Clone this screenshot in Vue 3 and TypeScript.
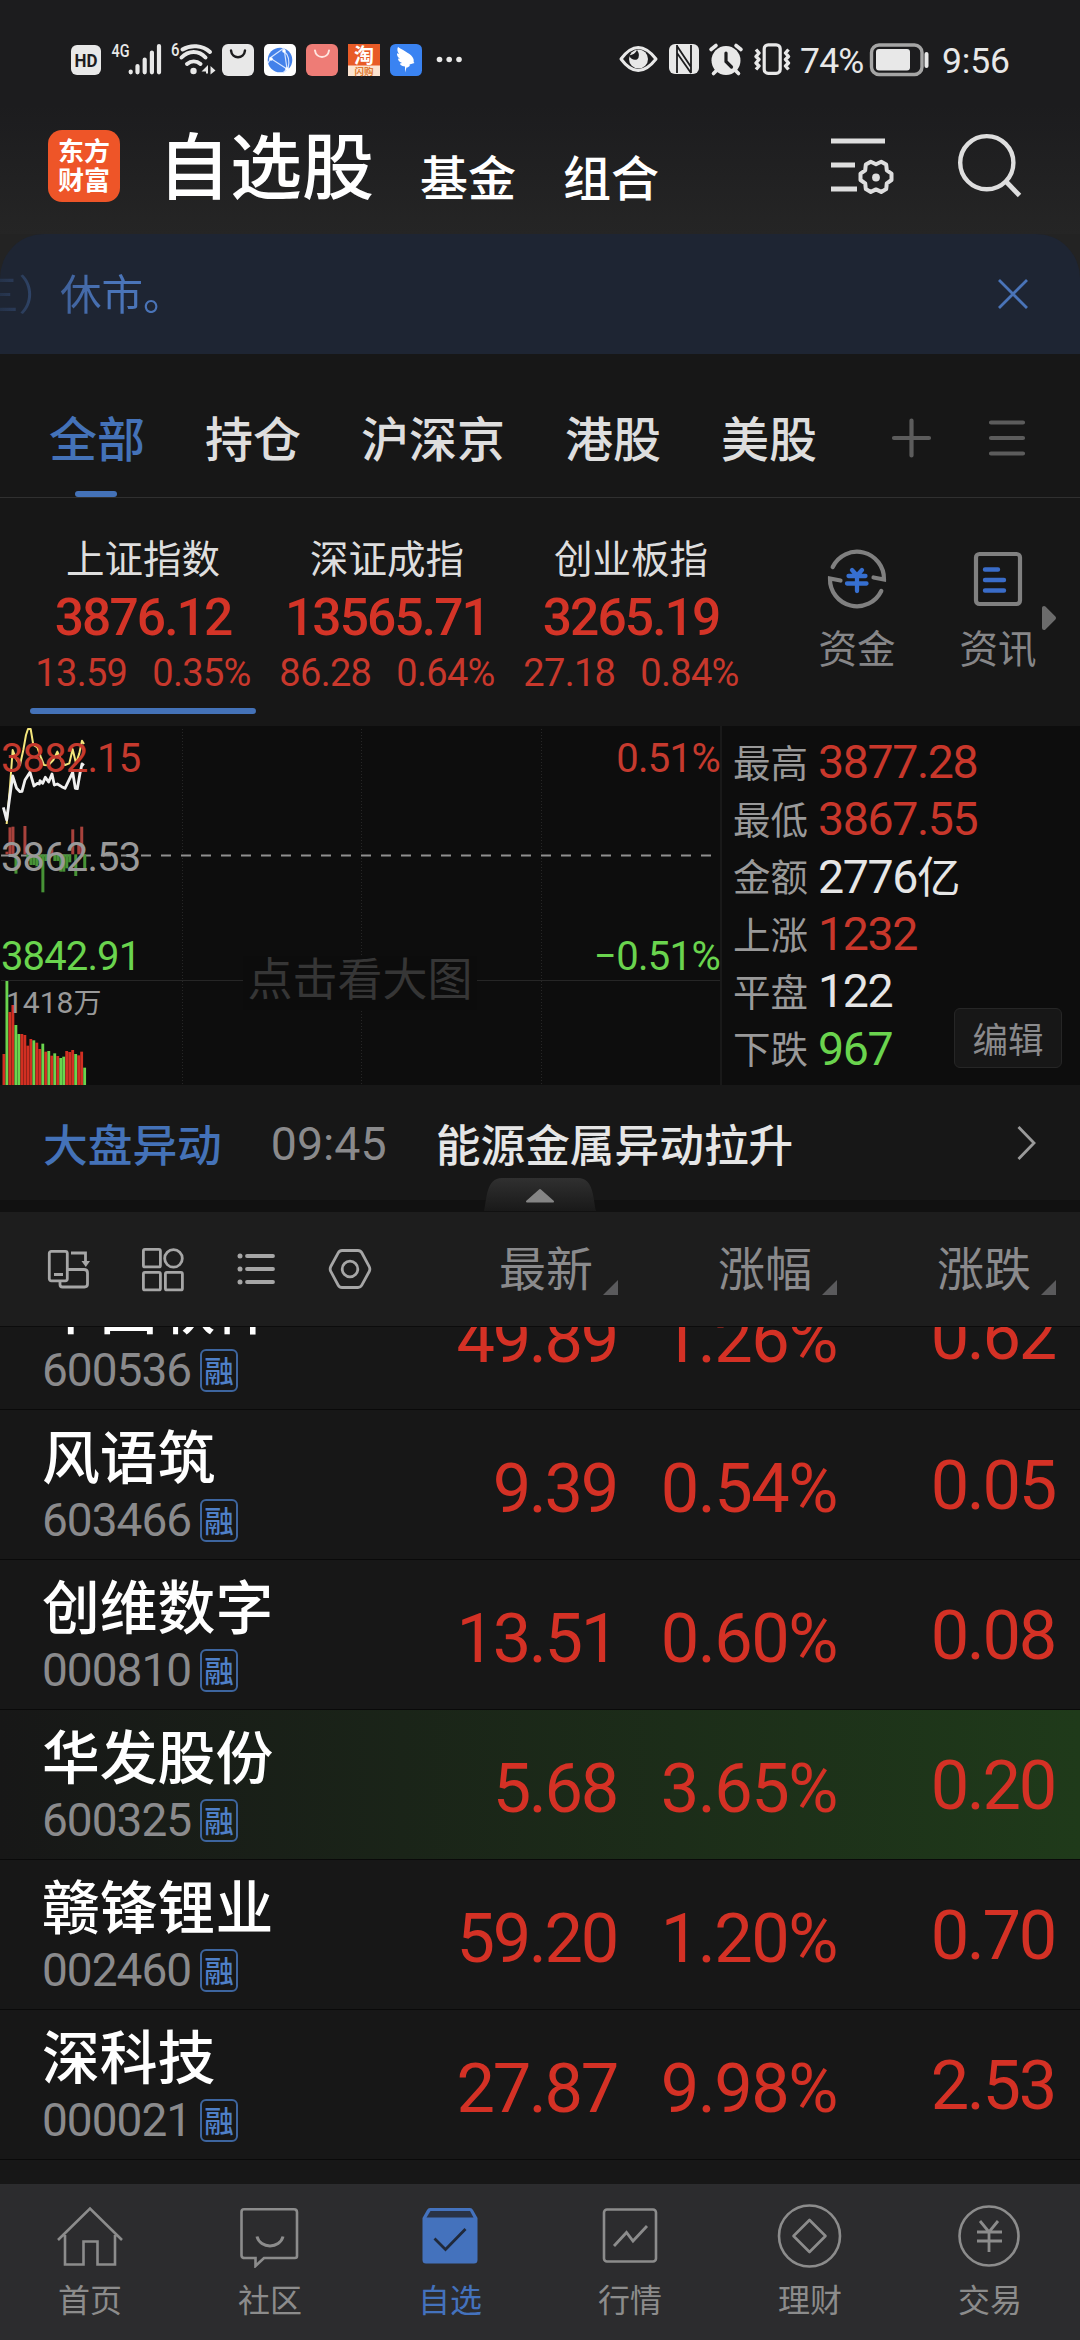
<script setup lang="ts">
interface IndexQuote {
  name: string
  value: string
  diff: string
  pct: string
}
interface Stat {
  label: string
  value: string
  unit?: string
  tone: 'up' | 'down' | 'flat'
}
interface Stock {
  name: string
  code: string
  price: string
  pct: string
  change: string
  flash?: boolean
}

const tabs = ['全部', '持仓', '沪深京', '港股', '美股']

const indices: IndexQuote[] = [
  { name: '上证指数', value: '3876.12', diff: '13.59', pct: '0.35%' },
  { name: '深证成指', value: '13565.71', diff: '86.28', pct: '0.64%' },
  { name: '创业板指', value: '3265.19', diff: '27.18', pct: '0.84%' },
]

const stats: Stat[] = [
  { label: '最高', value: '3877.28', tone: 'up' },
  { label: '最低', value: '3867.55', tone: 'up' },
  { label: '金额', value: '2776', unit: '亿', tone: 'flat' },
  { label: '上涨', value: '1232', tone: 'up' },
  { label: '平盘', value: '122', tone: 'flat' },
  { label: '下跌', value: '967', tone: 'down' },
]

const columns = ['最新', '涨幅', '涨跌']

const stocks: Stock[] = [
  { name: '中国软件', code: '600536', price: '49.89', pct: '1.26%', change: '0.62' },
  { name: '风语筑', code: '603466', price: '9.39', pct: '0.54%', change: '0.05' },
  { name: '创维数字', code: '000810', price: '13.51', pct: '0.60%', change: '0.08' },
  { name: '华发股份', code: '600325', price: '5.68', pct: '3.65%', change: '0.20', flash: true },
  { name: '赣锋锂业', code: '002460', price: '59.20', pct: '1.20%', change: '0.70' },
  { name: '深科技', code: '000021', price: '27.87', pct: '9.98%', change: '2.53' },
]

const RED = '#d22f22'
const GREEN = '#6ad44e'

// Minute volume: [bar height, direction]
const volumes: [number, 'r' | 'g'][] = [
  [93, 'r'], [312, 'g'], [219, 'r'], [240, 'r'], [180, 'g'], [153, 'g'], [153, 'r'],
  [150, 'r'], [118, 'r'], [138, 'r'], [134, 'g'], [127, 'r'], [108, 'r'], [124, 'g'],
  [100, 'r'], [102, 'g'], [88, 'r'], [95, 'g'], [87, 'r'], [81, 'g'], [85, 'g'],
  [102, 'r'], [99, 'r'], [105, 'r'], [93, 'g'], [89, 'r'], [100, 'r'], [52, 'g'],
]

// Minute momentum around the previous close, positive is up
const momentum = [
  0, 8, 81, 83, -58, 0, 0, 85, -20, -32, -32, -36, -28, -114, -20, -20, 18, -20, -20,
  -52, -52, -42, -24, 75, -65, 28, 83, -42,
]
</script>

<template>
  <div class="screen">
    <header class="top">
      <div class="status">
        <svg class="st-left" width="400" height="40" viewBox="0 0 400 40">
          <rect x="1" y="5" width="30" height="30" rx="6" fill="#e8e8e8" />
          <text x="4.500" y="27" class="hd" textLength="23" lengthAdjust="spacingAndGlyphs">HD</text>
          <text x="41.500" y="17" class="tiny" textLength="18" lengthAdjust="spacingAndGlyphs">4G</text>
          <g stroke="#e8e8e8" stroke-width="4.200" stroke-linecap="round">
            <path d="M60.700 31.500v.8M67.500 26v6.300M74.700 19.500v12.800M81.900 12.500v19.800M89 6v26.300" />
          </g>
          <text x="101" y="16" class="tiny" textLength="8.500" lengthAdjust="spacingAndGlyphs">6</text>
          <g fill="none" stroke="#e8e8e8" stroke-width="4" stroke-linecap="round">
            <path d="M112.500 9.500c8-5 20-4.500 27.500 2.500M111.500 17.500c7-7.500 17.500-7.500 24 0M117 24c4-3.500 9.500-3.500 13.500 0" />
          </g>
          <circle cx="123.500" cy="31" r="3.200" fill="#e8e8e8" />
          <path d="M131.500 31.500l6.500-6.500v8.500h-2v-2zM140.500 26l5 4.500-5 4z" fill="#e8e8e8" />
          <rect x="152" y="4" width="32" height="32" rx="6" fill="#e8e8e8" />
          <path d="M161 10.500c1 9 13 9 14 0" fill="none" stroke="#1c1c1e" stroke-width="2.400" stroke-linecap="round" />
          <rect x="194" y="4" width="32" height="32" rx="5" fill="#fff" />
          <circle cx="210" cy="20" r="12.300" fill="#4381ea" />
          <path d="M214 8l-14 10 17 11-3-21M198 23l3-5M217 29l-4 4M214 11q7 6 4 18" fill="none" stroke="#d5e4ff" stroke-width="1.200" />
          <g fill="#fff"><circle cx="214" cy="11" r="1.800" /><circle cx="201" cy="19" r="1.800" /><circle cx="217" cy="29" r="1.800" /></g>
          <rect x="236" y="4" width="32" height="32" rx="6" fill="#ee7c76" />
          <path d="M245 10.500c1 8.500 13 8.500 14 0" fill="none" stroke="#ffe6e0" stroke-width="2" stroke-linecap="round" />
          <rect x="278" y="4" width="32" height="32" fill="#e85b27" />
          <rect x="278" y="25.500" width="32" height="10.500" fill="#fbe3d0" />
          <text x="284" y="22.500" class="tao">淘</text>
          <text x="284.500" y="34.800" class="gou">闪购</text>
          <rect x="320" y="4" width="32" height="32" rx="5.500" fill="#3a83f2" />
          <path d="M328 7c6 4 14 7 15.500 12 .6 2-.5 3 1 4l-5 1.500c1 1-1 3-3 3l-1.500 5v-6c-4-.5-5-2-5-3l2-.5c-3-1-4-3-4-4.500l2 .2c-3-2-3-4-3-5.500l2 .8c-2-3-2-5-1-7z" fill="#fff" />
          <g fill="#e8e8e8"><circle cx="369.500" cy="19.500" r="2.800" /><circle cx="379.200" cy="19.500" r="2.800" /><circle cx="389" cy="19.500" r="2.800" /></g>
        </svg>
        <svg class="st-right" width="178" height="40" viewBox="0 0 178 40">
          <path d="M2 19q17-23 35 0q-18 23-35 0z" fill="none" stroke="#e8e8e8" stroke-width="3" stroke-linejoin="round" />
          <circle cx="19.500" cy="19" r="9.500" fill="#e8e8e8" />
          <path d="M10 15.500q6-1 8-5.500q4 6 0 9.500q-5 1.500-8-4z" fill="#1c1c1e" />
          <rect x="50" y="4" width="30" height="30" rx="6" fill="#e8e8e8" />
          <path d="M58 5v28M72 5v28M58 6l14 21M58 13l14 20" stroke="#1c1c1e" stroke-width="1.800" fill="none" />
          <circle cx="107" cy="20.500" r="14.500" fill="#e8e8e8" />
          <path d="M92 9.500l5-4M122 9.500l-5-4M97 31l-2.500 2.500M117 31l2.500 2.500" stroke="#e8e8e8" stroke-width="3.600" stroke-linecap="round" />
          <path d="M107 13v8.500l5.500 5.500" fill="none" stroke="#1c1c1e" stroke-width="3.200" stroke-linecap="round" />
          <rect x="145.200" y="4.800" width="16" height="28.600" rx="4" fill="none" stroke="#e8e8e8" stroke-width="3.200" />
          <path d="M137 9.500l3 3.500-3 3.500 3 3-3 3.500 3 3-3 3.500M169.500 9.500l-3 3.500 3 3.500-3 3 3 3.500-3 3 3 3.500" fill="none" stroke="#e8e8e8" stroke-width="3.400" stroke-linejoin="round" />
        </svg>
        <span class="st-num pct">74%</span>
        <svg class="battery" width="62" height="40" viewBox="0 0 62 40">
          <rect x="2.500" y="5" width="50.500" height="29.500" rx="7.500" fill="none" stroke="#a5a5a5" stroke-width="3.400" />
          <rect x="7" y="9" width="34" height="21.500" rx="3" fill="#e8e8e8" />
          <path d="M57.500 14v12" stroke="#e8e8e8" stroke-width="4" stroke-linecap="round" />
        </svg>
        <span class="st-num">9:56</span>
      </div>
      <div class="title-bar">
        <div class="logo"><span>东方</span><span>财富</span></div>
        <h1>自选股</h1>
        <a class="sub">基金</a>
        <a class="sub">组合</a>
        <svg class="act" width="200" height="80" viewBox="0 0 200 80">
          <g stroke="#dedede" fill="none" stroke-width="4.800">
            <path d="M3 21h54M3 45h24M3 69h26" />
            <path
              d="M48 44.200l5.200-2.500 5 2.900 .6 5.700 4.700 3.300v6.400l-4.700 3.300-.6 5.700-5 2.900-5.200-2.500-5.200 2.500-5-2.900-.6-5.700-4.700-3.300v-6.400l4.700-3.300 .6-5.700 5-2.900z"
              stroke-width="4" stroke-linejoin="round"
            />
            <circle cx="158.800" cy="42.700" r="26.600" stroke-width="4.400" />
            <path d="M178 61.500l13.500 14" />
          </g>
          <circle cx="48" cy="57.500" r="3.900" fill="#dedede" />
        </svg>
      </div>
    </header>

    <div class="notice-wrap">
      <div class="notice">
        <span class="notice-text">三）休市。</span>
        <svg width="34" height="34" viewBox="0 0 34 34">
          <path d="M3 3l28 28M31 3L3 31" stroke="#4a74b8" stroke-width="2.800" />
        </svg>
      </div>
    </div>

    <nav class="tabs">
      <a v-for="(t, i) in tabs" :key="t" :class="{ on: i === 0 }">{{ t }}</a>
      <svg width="140" height="40" viewBox="0 0 140 40">
        <path d="M5 20h35M22.500 2.500v35M102 4.500h32M102 20h32M102 35.500h32" stroke="#5c5c5c" stroke-width="4.200" stroke-linecap="round" />
      </svg>
    </nav>

    <section class="indices">
      <div v-for="(q, i) in indices" :key="q.name" class="index" :class="{ on: i === 0 }">
        <div class="iname">{{ q.name }}</div>
        <div class="ival">{{ q.value }}</div>
        <div class="idiff"><span>{{ q.diff }}</span><span>{{ q.pct }}</span></div>
      </div>
      <div class="tool funds">
        <svg width="62" height="62" viewBox="0 0 62 62">
          <g fill="none" stroke="#808080" stroke-width="4.200" stroke-linecap="round">
            <path d="M6.700 19A27 27 0 0 1 58 31.500l-10.500-2" />
            <path d="M55.300 43A27 27 0 0 1 4 30.500l10.500 2" />
          </g>
          <path d="M26 22l5 5.500 5-5.500M22.500 28h17M21 35.500h19.500M31 28v15" fill="none" stroke="#366fd0" stroke-width="4.300" stroke-linecap="round" />
        </svg>
        <span>资金</span>
      </div>
      <div class="tool news">
        <svg width="62" height="62" viewBox="0 0 62 62">
          <rect x="9" y="6" width="44" height="50" rx="3.500" fill="none" stroke="#808080" stroke-width="4.200" />
          <path d="M18 21.500h13M18 32h19M18 42.500h19" stroke="#3a6cc8" stroke-width="4.400" stroke-linecap="round" />
        </svg>
        <span>资讯</span>
      </div>
      <svg class="more" width="16" height="26" viewBox="0 0 16 26">
        <path d="M3 3v20l10-10z" fill="#6b6b6b" stroke="#6b6b6b" stroke-width="4" stroke-linejoin="round" />
      </svg>
    </section>

    <section class="market">
      <svg class="chart" width="720" height="360" viewBox="0 0 720 360">
        <path d="M182.500 3v356M361.500 3v356M541.500 3v356" stroke="#262626" stroke-width="1" stroke-dasharray="1 2" />
        <path d="M1 254.500h719" stroke="#262626" stroke-width="1.200" />
        <rect x="243" y="230" width="234" height="54" fill="#0c0c0c" />
        <path d="M1 129.500h719" stroke="#8f8f8f" stroke-width="2" stroke-dasharray="10 10" />
        <g transform="translate(0 -6) scale(.33333)">
          <rect
            v-for="(m, i) in momentum" :key="'m' + i" :x="7.500 + i * 8.970" :y="m > 0 ? 403 - m : 403"
            width="9" :height="Math.abs(m)" :fill="m > 0 ? '#a8423c' : '#479336'"
          />
          <rect
            v-for="(v, i) in volumes" :key="'v' + i" :x="7.500 + i * 8.970" :y="1095 - v[0]"
            width="8.500" :height="v[0]" :fill="v[1] === 'r' ? RED : GREEN"
          />
          <polyline
            points="20,312 30,200 38,90 50,120 60,135 70,90 78,45 84,27 92,27 100,75 112,82 122,110 132,135 145,136 160,120 172,95 185,125 195,135 208,130 218,88 228,130 238,100 246,62 252,72"
            fill="none" stroke="#f4e67c" stroke-width="6" stroke-linejoin="round"
          />
          <polyline
            points="10,262 20,300 28,240 38,168 50,205 60,215 66,214 75,180 90,157 102,198 112,190 118,192 120,182 128,190 136,172 146,186 156,162 163,195 172,192 185,200 195,205 208,178 218,157 226,205 232,206 240,160 246,132 252,136"
            fill="none" stroke="#f0f0f0" stroke-width="8.500" stroke-linejoin="round"
          />
        </g>
        <text x="1" y="45.500" fill="#c53a2e" textLength="139.500">3882.15</text>
        <text x="1" y="144.500" fill="#999" textLength="139.500">3862.53</text>
        <text x="1" y="244" :fill="GREEN" textLength="139.500">3842.91</text>
        <text x="720" y="45.500" fill="#c53a2e" text-anchor="end">0.51%</text>
        <text x="720" y="244" :fill="GREEN" text-anchor="end">−0.51%</text>
        <text x="6" y="287" class="vol">1418<tspan class="cjk">万</tspan></text>
        <text x="360" y="270" class="mark" text-anchor="middle">点击看大图</text>
      </svg>
      <div class="stats">
        <div v-for="s in stats" :key="s.label" class="stat">
          <span class="slabel">{{ s.label }}</span>
          <span class="sval" :class="s.tone">{{ s.value }}<i v-if="s.unit">{{ s.unit }}</i></span>
        </div>
        <button class="edit">编辑</button>
      </div>
    </section>

    <section class="alert">
      <span class="atag">大盘异动</span>
      <span class="atime">09:45</span>
      <span class="atext">能源金属异动拉升</span>
      <svg width="20" height="36" viewBox="0 0 20 36">
        <path d="M1.500 2l15.500 16-15.500 16" fill="none" stroke="#9a9a9a" stroke-width="2.800" />
      </svg>
      <svg class="handle" width="112" height="33" viewBox="0 0 112 33">
        <defs>
          <linearGradient id="hg" x1="0" y1="0" x2="0" y2="1">
            <stop offset="0" stop-color="#303030" />
            <stop offset="1" stop-color="#191919" />
          </linearGradient>
        </defs>
        <path d="M0 33c3-12 2-33 18-33h76c16 0 15 21 18 33z" fill="url(#hg)" />
        <path d="M43 23.500l13-11.500 13 11.500z" fill="#858585" stroke="#858585" stroke-width="2" stroke-linejoin="round" />
      </svg>
    </section>
    <div class="strip"></div>

    <section class="toolbar">
      <svg width="330" height="46" viewBox="0 0 330 46">
        <g fill="none" stroke="#a6a6a6" stroke-width="2.800">
          <rect x="5.300" y="5.300" width="18" height="29.500" rx="2" />
          <path d="M10 28.500h9M27 7h14.500v10M24 23.500h16q3.500 0 3.500 3.500v11q0 3-3 3h-22q-2.500 0-2.500-2.500V35" />
          <rect x="99.400" y="3.400" width="17" height="17.500" rx="1.500" />
          <circle cx="129.500" cy="12.400" r="8.800" />
          <rect x="99.400" y="26.400" width="17" height="17.500" rx="1.500" />
          <rect x="121.400" y="26.400" width="17" height="17.500" rx="1.500" />
          <path d="M203 10h26M203 23h26M203 36h26" stroke-width="3.800" stroke-linecap="round" />
          <path d="M298 4.500h16q2.500 0 3.800 2.300l7.300 13.500q1.500 2.700 0 5.400l-7.300 13.500q-1.300 2.300-3.800 2.300h-16q-2.500 0-3.800-2.300l-7.300-13.500q-1.500-2.700 0-5.400l7.300-13.500q1.300-2.300 3.800-2.300z" />
          <circle cx="306" cy="23" r="7.800" />
        </g>
        <path d="M37.500 15h8.500l-4.200 6z" fill="#a6a6a6" />
        <g fill="#a6a6a6"><circle cx="196" cy="10" r="2.500" /><circle cx="196" cy="23" r="2.500" /><circle cx="196" cy="36" r="2.500" /></g>
      </svg>
      <div v-for="c in columns" :key="c" class="col">
        <span>{{ c }}</span>
        <i></i>
      </div>
    </section>

    <main class="list">
      <div v-for="s in stocks" :key="s.code" class="row" :class="{ flash: s.flash }">
        <div class="who">
          <div class="name">{{ s.name }}</div>
          <div class="code"><span>{{ s.code }}</span><b>融</b></div>
        </div>
        <div class="num">{{ s.price }}</div>
        <div class="num rate">{{ s.pct }}</div>
        <div class="num chg">{{ s.change }}</div>
      </div>
    </main>

    <footer class="nav">
      <a>
        <svg width="70" height="66" viewBox="0 0 70 66">
          <path d="M3 38L35 6.500 67 38M10 33v29.500h18.500V39.500h14v23H60V33" fill="none" stroke="#8c8c8c" stroke-width="2.600" />
        </svg>
        <span>首页</span>
      </a>
      <a>
        <svg width="70" height="66" viewBox="0 0 70 66">
          <path d="M9 7.300h50q3 0 3 3V54q0 2-2 2H29l-8.500 8v-8H10q-3.500 0-3.500-2.500V10q0-2.700 2.500-2.700z" fill="none" stroke="#8c8c8c" stroke-width="2.600" />
          <path d="M22 34.500c3 12.500 23 12.500 26 0" fill="none" stroke="#8c8c8c" stroke-width="3" />
        </svg>
        <span>社区</span>
      </a>
      <a class="on">
        <svg width="70" height="66" viewBox="0 0 70 66">
          <path d="M15 6h40q2 0 3 2l4.500 8v42q0 3.500-3.500 3.500H11q-3.500 0-3.500-3.500V16L12 8q1-2 3-2z" fill="#4472bd" />
          <path d="M15.500 9h39.500l3.500 6.500H11.500z" fill="#2a3346" />
          <path d="M19.500 36.500l11 11 20-20.500" fill="none" stroke="#20293a" stroke-width="2.800" />
        </svg>
        <span>自选</span>
      </a>
      <a>
        <svg width="70" height="66" viewBox="0 0 70 66">
          <rect x="9" y="7.500" width="52" height="52" rx="3" fill="none" stroke="#8c8c8c" stroke-width="2.600" />
          <path d="M19 44l12.500-13.500 6.500 8.500L52 24" fill="none" stroke="#8c8c8c" stroke-width="2.800" />
        </svg>
        <span>行情</span>
      </a>
      <a>
        <svg width="70" height="66" viewBox="0 0 70 66">
          <circle cx="34.500" cy="34" r="30.500" fill="none" stroke="#8c8c8c" stroke-width="2.600" />
          <path d="M34.500 18l16 16-16 16-16-16z" fill="none" stroke="#8c8c8c" stroke-width="2.600" stroke-linejoin="round" />
        </svg>
        <span>理财</span>
      </a>
      <a>
        <svg width="70" height="66" viewBox="0 0 70 66">
          <circle cx="34" cy="34" r="29.500" fill="none" stroke="#8c8c8c" stroke-width="2.600" />
          <path d="M25 19l9 11 9-11M22 30h25M22 39h25M34 30v20" fill="none" stroke="#8c8c8c" stroke-width="2.800" />
        </svg>
        <span>交易</span>
      </a>
    </footer>
  </div>
</template>

<style>
html,
body {
  margin: 0;
  background: #171717;
}
</style>

<style scoped>
.screen {
  width: 1080px;
  height: 2340px;
  overflow: hidden;
  display: flex;
  flex-direction: column;
  background: #171717;
  font-family: 'Noto Sans CJK SC', sans-serif;
  color: #e2e2e2;
}
svg {
  display: block;
  flex: none;
}
.top {
  height: 234px;
  flex: none;
  background: linear-gradient(#1c1c1e 0 45%, #252525);
}
.status {
  height: 120px;
  display: flex;
  align-items: flex-start;
  padding: 40px 0 0 70px;
  box-sizing: border-box;
}
.st-right {
  margin-left: 149px;
}
.hd {
  font: 700 18px Roboto, sans-serif;
  fill: #1c1c1e;
}
.tiny {
  font: 500 19px Roboto, sans-serif;
  fill: #e8e8e8;
}
.tao {
  font: 700 20px 'Noto Sans CJK SC', sans-serif;
  fill: #fff;
}
.gou {
  font: 700 9.500px 'Noto Sans CJK SC', sans-serif;
  fill: #dd7a33;
}
.st-num {
  font: 400 35.500px/40px Roboto, sans-serif;
  color: #e8e8e8;
  letter-spacing: -0.2px;
  margin-top: 1px;
}
.st-num.pct {
  width: 67px;
  margin-left: 3px;
  white-space: nowrap;
  letter-spacing: -0.8px;
}
.battery {
  margin: 0 11px 0 2px;
}
.title-bar {
  display: flex;
  align-items: flex-start;
  padding-left: 48px;
}
.logo {
  width: 72px;
  height: 72px;
  margin-top: 10px;
  box-sizing: border-box;
  padding-top: 5px;
  border-radius: 14px;
  background: #ee5528;
  color: #fff;
  display: flex;
  flex-direction: column;
  align-items: center;
  font-size: 26px;
  font-weight: 700;
  line-height: 29px;
}
h1 {
  margin: 1px 0 0 38px;
  font-size: 72px;
  line-height: 82px;
  font-weight: 500;
  color: #fff;
}
.sub {
  margin-left: 47px;
  margin-top: 14px;
  font-size: 48px;
  line-height: 82px;
  font-weight: 500;
  color: #fff;
}
.sub:first-of-type {
  margin-left: 46px;
}
.act {
  margin-left: 169px;
}
.notice-wrap {
  flex: none;
  background: #232323;
}
.notice {
  height: 120px;
  border-radius: 44px 44px 0 0;
  background: #1e2533;
  display: flex;
  justify-content: space-between;
  align-items: center;
  overflow: hidden;
  padding-right: 50px;
}
.notice-text {
  margin-left: -23px;
  font-size: 41.500px;
  line-height: 60px;
  margin-top: -5px;
  color: transparent;
  background: linear-gradient(90deg, rgba(74, 116, 184, 0.15) 20px, rgba(74, 116, 184, 0.35) 50px, #3f6099 84px, #4a74b8 130px);
  background-clip: text;
  -webkit-background-clip: text;
}
.tabs {
  flex: none;
  height: 144px;
  box-sizing: border-box;
  border-bottom: 1px solid #303030;
  display: flex;
  gap: 60px;
  padding: 0 0 0 49px;
  font-size: 48px;
  line-height: 165px;
  color: #dedede;
  font-weight: 500;
}
.tabs a {
  position: relative;
  height: 143px;
}
.tabs a.on {
  color: #4472b8;
}
.tabs a.on::after {
  content: '';
  position: absolute;
  left: 26px;
  bottom: 0;
  width: 42px;
  height: 6px;
  border-radius: 3px;
  background: #4472b8;
}
.tabs svg {
  margin: 64px 0 0 12px;
}
.indices {
  flex: none;
  height: 228px;
  position: relative;
  display: flex;
  padding-left: 21px;
}
.index {
  position: relative;
  width: 244px;
  text-align: center;
}
.index.on::after {
  content: '';
  position: absolute;
  left: 9px;
  bottom: 12px;
  width: 226px;
  height: 6px;
  border-radius: 3px;
  background: #4472b8;
}
.iname {
  margin-top: 32px;
  font-size: 38.500px;
  line-height: 52px;
  color: #dedede;
}
.ival {
  font: 500 51.500px/60px Roboto, sans-serif;
  letter-spacing: -1.900px;
  color: #d43427;
  margin-top: 6px;
}
.idiff {
  font: 400 38px/44px Roboto, sans-serif;
  letter-spacing: -0.700px;
  color: #c8382c;
  display: flex;
  justify-content: center;
  gap: 25px;
  margin-top: 3px;
}
.tool {
  display: flex;
  flex-direction: column;
  align-items: center;
  width: 78px;
  font-size: 38.500px;
  line-height: 52px;
  color: #868688;
  padding-top: 50px;
}
.tool span {
  margin-top: 10px;
}
.funds {
  margin-left: 65px;
}
.news {
  margin-left: 63px;
}
.more {
  margin: 107px 0 0 4px;
}
.market {
  flex: none;
  height: 360px;
  display: flex;
  background: #0d0d0d;
  border-bottom: 1px solid #171717;
  box-sizing: border-box;
}
.chart {
  overflow: hidden;
}
.chart text {
  font-family: Roboto, sans-serif;
  font-size: 40px;
  letter-spacing: -0.700px;
}
.chart text.vol {
  font-size: 30px;
  letter-spacing: 0;
  fill: #999;
}
.chart .cjk {
  font-family: 'Noto Sans CJK SC', sans-serif;
  font-size: 28px;
}
.chart text.mark {
  font-family: 'Noto Sans CJK SC', sans-serif;
  font-size: 45px;
  letter-spacing: 0;
  fill: #363636;
}
.stats {
  position: relative;
  flex: 1;
  border-left: 2px solid #191919;
  padding: 8px 0 0 11px;
}
.stat {
  height: 57.300px;
  display: flex;
  align-items: center;
}
.slabel {
  width: 85px;
  font-size: 37.500px;
  line-height: 52px;
  color: #999;
  margin-top: -4px;
}
.sval {
  font: 400 46.500px/57px Roboto, sans-serif;
  letter-spacing: -1.400px;
}
.sval i {
  font: 400 43.500px/40px 'Noto Sans CJK SC', sans-serif;
}
.up {
  color: #c8372b;
}
.down {
  color: #6ad44e;
}
.flat {
  color: #e6e6e6;
}
.edit {
  position: absolute;
  right: 18px;
  bottom: 17px;
  width: 108px;
  height: 60px;
  padding: 0;
  border: 1.500px solid #262626;
  border-radius: 6px;
  background: #171717;
  color: #8a8a8c;
  font: 400 35.500px/50px 'Noto Sans CJK SC', sans-serif;
}
.alert {
  position: relative;
  flex: none;
  height: 114px;
  display: flex;
  align-items: center;
  padding-left: 43px;
  font-size: 44.700px;
}
.alert span {
  line-height: 60px;
}
.atag {
  color: #4472b8;
  font-weight: 500;
}
.alert .atime {
  width: 116px;
  margin: 2px 0 0 49px;
  font-family: Roboto, sans-serif;
  font-size: 46.500px;
  color: #8a8a8c;
}
.atext {
  margin-left: 49px;
  color: #e6e6e6;
  font-weight: 500;
}
.alert > svg:not(.handle) {
  margin-left: 224px;
}
.handle {
  position: absolute;
  left: 484px;
  top: 92px;
}
.strip {
  flex: none;
  height: 12px;
  background: #111;
}
.toolbar {
  flex: none;
  height: 115px;
  box-sizing: border-box;
  background: #1d1d1d;
  border-bottom: 1px solid #0c0c0c;
  display: flex;
  padding-left: 44px;
}
.toolbar svg {
  margin-top: 34px;
  margin-right: 25px;
}
.col {
  width: 219px;
  display: flex;
  align-items: flex-start;
  justify-content: flex-end;
  font-size: 47px;
  line-height: 107px;
  color: #8a8a8c;
}
.col i {
  width: 15px;
  height: 15px;
  margin: 68px 0 0 10px;
  background: #5a5a5c;
  clip-path: polygon(100% 0, 100% 100%, 0 100%);
}
.list {
  flex: 1;
  min-height: 0;
  overflow: hidden;
}
.row {
  height: 150px;
  box-sizing: border-box;
  border-bottom: 1px solid #0a0a0a;
  display: grid;
  grid-template-columns: 400px 217px 220px 218px;
}
.row:first-child {
  margin-top: -67px;
}
.row.flash {
  background: linear-gradient(90deg, #171717, #1f3a1a);
}
.who {
  padding-left: 42px;
}
.name {
  margin-top: 8px;
  font-size: 57.800px;
  line-height: 72px;
  color: #fff;
  font-weight: 500;
}
.code {
  display: flex;
  align-items: center;
  height: 46px;
  margin-top: 7px;
}
.code span {
  width: 158px;
  font: 400 46px/46px Roboto, sans-serif;
  letter-spacing: -1px;
  color: #8a8a8c;
}
.code b {
  width: 38px;
  height: 43px;
  box-sizing: border-box;
  border: 2px solid #3d659f;
  border-radius: 6px;
  font-size: 29.500px;
  line-height: 36px;
  font-weight: 500;
  color: #4f80c8;
  display: flex;
  justify-content: center;
}
.num {
  font: 400 68.500px/158px Roboto, sans-serif;
  letter-spacing: -2.300px;
  color: #d43125;
  text-align: right;
}
.rate {
  letter-spacing: -1.500px;
}
.chg {
  line-height: 151px;
}
.nav {
  flex: none;
  height: 156px;
  background: #2c2c2e;
  display: flex;
}
.nav a {
  width: 180px;
  display: flex;
  flex-direction: column;
  align-items: center;
  color: #8c8c8c;
  font-size: 32px;
  line-height: 44px;
  padding-top: 18px;
  box-sizing: border-box;
}
.nav span {
  margin-top: 8px;
}
.nav .on {
  color: #4472bd;
}
</style>
